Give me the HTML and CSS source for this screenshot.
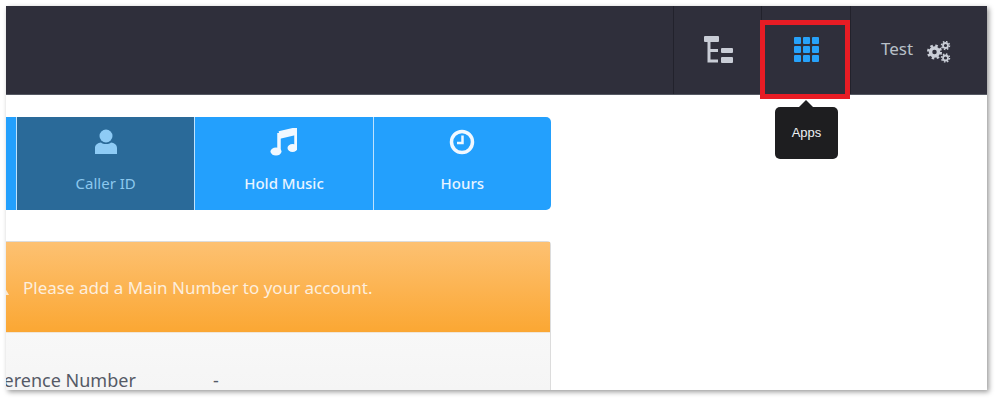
FILE: index.html
```html
<!DOCTYPE html>
<html lang="en">
<head>
  <meta charset="UTF-8">
  <title>Apps</title>
  <link rel="stylesheet" href="styles.css">
</head>
<body>
  <div class="frame">
    <div class="topbar">
      <div class="nav-item nav-tree">
        <svg width="30" height="30" viewBox="0 0 30 30">
          <rect x="1" y="0" width="15" height="6" rx="1" fill="#c9cdd6"/>
          <path d="M6 6V25H15M6 14.500H15" fill="none" stroke="#c9cdd6" stroke-width="3"/>
          <rect x="18" y="12" width="12" height="5" rx="1" fill="#c9cdd6"/>
          <rect x="18" y="21" width="12" height="6" rx="1" fill="#c9cdd6"/>
        </svg>
      </div>
      <div class="nav-item nav-apps">
        <div class="app-grid">
          <span></span><span></span><span></span>
          <span></span><span></span><span></span>
          <span></span><span></span><span></span>
        </div>
        <div class="red-box"></div>
        <div class="tip">Apps</div>
      </div>
      <div class="nav-item nav-user">
        <span class="user-name">Test</span>
        <svg width="24" height="22" viewBox="0 0 24 22">
          <g fill="none" stroke="#c9cdd6">
            <circle cx="7.500" cy="11" r="4" stroke-width="3.500"/>
            <circle cx="7.500" cy="11" r="6.300" stroke-width="2.500" stroke-dasharray="2.500 2.450"/>
            <circle cx="18.500" cy="4.500" r="2.500" stroke-width="1.800"/>
            <circle cx="18.500" cy="4.500" r="4" stroke-width="1.500" stroke-dasharray="1.500 1.640"/>
            <circle cx="18.500" cy="17" r="2.500" stroke-width="1.800"/>
            <circle cx="18.500" cy="17" r="4" stroke-width="1.500" stroke-dasharray="1.500 1.640"/>
          </g>
        </svg>
      </div>
    </div>

    <div class="content">
      <div class="tabs">
        <div class="tab tab-stub"></div>
        <div class="tab tab-active">
          <svg width="24" height="26" viewBox="0 0 24 26">
            <circle cx="12" cy="7" r="6.500" fill="#8ecbf5"/>
            <path d="M1 25V19C1 15.500 4 14 7 13.500C9 15.500 15 15.500 17 13.500C20 14 23 15.500 23 19V25Z" fill="#8ecbf5"/>
          </svg>
          <span>Caller ID</span>
        </div>
        <div class="tab">
          <svg width="27" height="28" viewBox="0 0 27 28">
            <path d="M9 5L26 1V20" fill="none" stroke="#f1f8ff" stroke-width="3.500"/>
            <path d="M9 5L26 1V7L9 11Z" fill="#f1f8ff"/>
            <path d="M9 5V23" fill="none" stroke="#f1f8ff" stroke-width="3.500"/>
            <ellipse cx="6" cy="23.500" rx="5.500" ry="4" fill="#f1f8ff"/>
            <ellipse cx="22.500" cy="20" rx="5" ry="4" fill="#f1f8ff"/>
          </svg>
          <span>Hold Music</span>
        </div>
        <div class="tab">
          <svg width="26" height="26" viewBox="0 0 26 26">
            <circle cx="13" cy="13" r="10.500" fill="none" stroke="#f1f8ff" stroke-width="3.500"/>
            <path d="M13.500 6.500V14H8" fill="none" stroke="#f1f8ff" stroke-width="2.500"/>
          </svg>
          <span>Hours</span>
        </div>
      </div>

      <div class="panel">
        <div class="alert">
          <svg class="alert-icon" width="20" height="18" viewBox="0 0 20 18">
            <path d="M10 1L19 17H1Z" fill="#fde9cf"/>
          </svg>
          <span>Please add a Main Number to your account.</span>
        </div>
        <div class="panel-body">
          <div class="info-row">
            <span class="info-label">Conference Number</span>
            <span class="info-value">-</span>
          </div>
        </div>
      </div>
    </div>
  </div>
</body>
</html>
```

FILE: styles.css
```css
html, body {
  margin: 0;
  height: 100%;
  background-color: #fff;
  overflow: hidden;
}

body {
  font-family: "Noto Sans", sans-serif;
}

.frame {
  width: 981px;
  height: 384px;
  margin: 6px 0 0 6px;
  background-color: #fff;
  box-shadow: 2px 2px 5px rgba(0, 0, 0, 0.4);
  overflow: hidden;
  position: relative;
}

.topbar {
  display: flex;
  justify-content: flex-end;
  height: 89px;
  background-color: #2f2f3b;
  border-bottom: 1px solid #555963;
  box-sizing: border-box;
}

.nav-item {
  position: relative;
  display: flex;
  box-sizing: border-box;
  border-left: 1px solid #22222c;
}

.nav-tree {
  width: 88px;
  padding: 30px 0 0 29px;
}

.nav-apps {
  width: 89px;
  justify-content: center;
  padding-top: 31px;
}

.nav-user {
  width: 137px;
  padding: 30px 0 0 30px;
  gap: 14px;
}

.user-name {
  font-size: 17px;
  line-height: 25px;
  color: #b9c0c8;
}

.nav-user svg {
  margin-top: 5px;
}

.app-grid {
  display: grid;
  grid-template-columns: repeat(3, 7px);
  grid-auto-rows: 7px;
  gap: 2px;
  align-self: flex-start;
}

.app-grid span {
  background-color: #27a2fa;
  border-radius: 1px;
}

.red-box {
  position: absolute;
  left: -2px;
  top: 14px;
  width: 90px;
  height: 79px;
  box-sizing: border-box;
  border: 5px solid #e81c24;
}

.tip {
  position: absolute;
  left: 13px;
  top: 101px;
  width: 63px;
  height: 52px;
  line-height: 52px;
  text-align: center;
  background-color: #1e1e20;
  border-radius: 5px;
  color: #eef1f4;
  font-family: "Liberation Sans", sans-serif;
  font-size: 13px;
}

.tip::before {
  content: "";
  position: absolute;
  left: 24px;
  top: -7px;
  border-left: 7px solid transparent;
  border-right: 7px solid transparent;
  border-bottom: 7px solid #1e1e20;
}

.content {
  width: 545px;
  padding-top: 22px;
}

.tabs {
  display: flex;
  height: 93px;
  border-radius: 0 5px 5px 0;
  overflow: hidden;
  background-color: #23a0fd;
}

.tab {
  flex: 1;
  display: flex;
  flex-direction: column;
  align-items: center;
  padding-top: 11px;
  box-sizing: border-box;
  border-left: 1px solid #bfe2fd;
  color: #e8f4ff;
  font-size: 15px;
  font-weight: 500;
}

.tab svg {
  height: 28px;
}

.tab span {
  margin-top: 16px;
  line-height: 22px;
}

.tab-stub {
  flex: none;
  width: 10px;
  border-left: none;
}

.tab-active {
  background-color: #2a6a99;
  color: #8cc8ee;
  font-weight: 400;
}

.panel {
  margin-top: 31px;
  border-right: 1px solid #dcdcdc;
  border-top: 1px solid #dcdcdc;
  border-radius: 0 4px 0 0;
  background-color: #f6f6f6;
}

.alert {
  display: flex;
  align-items: center;
  height: 91px;
  background: linear-gradient(#fdc172, #fba733);
  color: #fdeedd;
  font-size: 17px;
  padding-left: 17px;
  position: relative;
  border-bottom: 1px solid #f0e6d8;
  box-sizing: border-box;
}

.alert-icon {
  position: absolute;
  left: -16px;
  top: 36px;
}

.panel-body {
  padding-top: 34px;
  background: linear-gradient(#f8f8f8, #f3f3f3);
  height: 60px;
}

.info-row {
  display: flex;
  font-size: 18px;
  line-height: 26px;
  color: #555a66;
}

.info-label {
  width: 200px;
  margin-left: -42px;
  flex: none;
  white-space: nowrap;
  text-indent: 0;
}

.info-value {
  margin-left: 49px;
}
```
